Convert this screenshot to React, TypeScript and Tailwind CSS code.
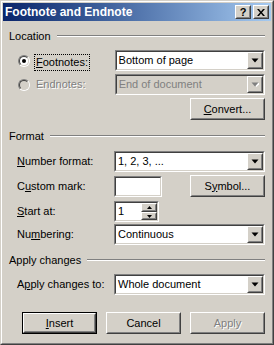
import React from "react";

const font = "[font-family:'Liberation_Sans',Arial,sans-serif]";

function Raised({ className = "", inner = "", children }: { className?: string; inner?: string; children?: React.ReactNode }) {
  return (
    <div className={`border border-t-white border-l-white border-r-[#404040] border-b-[#404040] bg-[#d4d0c8] ${className}`}>
      <div className={`w-full h-full border border-t-[#d4d0c8] border-l-[#d4d0c8] border-r-[#808080] border-b-[#808080] flex items-center justify-center ${inner}`}>
        {children}
      </div>
    </div>
  );
}

function Sunken({ className = "", bg = "bg-white", children }: { className?: string; bg?: string; children?: React.ReactNode }) {
  return (
    <div className={`border border-t-[#808080] border-l-[#808080] border-r-white border-b-white ${className}`}>
      <div className={`w-full h-full border border-t-[#404040] border-l-[#404040] border-r-[#d4d0c8] border-b-[#d4d0c8] flex items-center ${bg}`}>
        {children}
      </div>
    </div>
  );
}

function Arrow({ disabled = false }: { disabled?: boolean }) {
  return (
    <svg width="8" height="5" viewBox="0 0 8 5">
      {disabled && <path d="M2 1h7l-3.5 4z" fill="#fff" />}
      <path d="M0.5 0.5h7l-3.5 4z" fill={disabled ? "#808080" : "#000"} />
    </svg>
  );
}

function Combo({ value, disabled = false }: { value: string; disabled?: boolean }) {
  return (
    <Sunken className="w-[151px] h-[21px]" bg={disabled ? "bg-[#d4d0c8]" : "bg-white"}>
      <span className={`flex-1 pl-[2px] text-[11px] leading-none ${disabled ? "text-[#808080]" : "text-black"}`}>{value}</span>
      <Raised className="w-[16px] h-[17px]">
        <Arrow disabled={disabled} />
      </Raised>
    </Sunken>
  );
}

function Btn({ children, disabled = false, def = false }: { children: React.ReactNode; disabled?: boolean; def?: boolean }) {
  const text = (
    <span className={`text-[11px] leading-none ${disabled ? "text-[#808080] [text-shadow:1px_1px_0_#fff]" : "text-black"}`}>{children}</span>
  );
  if (def) {
    return (
      <div className="w-[75px] h-[22px] border border-black">
        <Raised className="w-full h-full">{text}</Raised>
      </div>
    );
  }
  return <Raised className="w-[75px] h-[22px]">{text}</Raised>;
}

function Header({ label }: { label: string }) {
  return (
    <div className="flex items-center h-[14px]">
      <span className="text-[11px] leading-none text-black">{label}</span>
      <div className="flex-1 ml-[6px] h-[2px] border-t border-t-[#808080] border-b border-b-white" />
    </div>
  );
}

function Radio({ checked, disabled = false }: { checked: boolean; disabled?: boolean }) {
  return (
    <div className="w-[12px] h-[12px] rounded-full border border-t-[#808080] border-l-[#808080] border-r-white border-b-white">
      <div className={`w-full h-full rounded-full border border-t-[#404040] border-l-[#404040] border-r-[#d4d0c8] border-b-[#d4d0c8] flex items-center justify-center ${disabled ? "bg-[#d4d0c8]" : "bg-white"}`}>
        {checked && <div className="w-[4px] h-[4px] rounded-full bg-black" />}
      </div>
    </div>
  );
}

function Row({ label, children }: { label: React.ReactNode; children: React.ReactNode }) {
  return (
    <div className="flex items-center pl-[8px]">
      <div className="w-[97px] text-[11px] leading-none text-black">{label}</div>
      {children}
    </div>
  );
}

export default function App() {
  return (
    <div className={`w-[274px] h-[345px] bg-[#d4d0c8] border border-t-[#d4d0c8] border-l-[#d4d0c8] border-r-[#404040] border-b-[#404040] ${font}`}>
      <div className="w-full h-full border border-t-white border-l-white border-r-[#808080] border-b-[#808080] p-[1px] flex flex-col">
        <div className="h-[18px] bg-linear-to-r from-[#0a246a] to-[#a6caf0] flex items-center pl-[2px] pr-[2px]">
          <span className="flex-1 text-white font-bold text-[12px] leading-none">Footnote and Endnote</span>
          <div className="flex gap-[2px]">
            <Raised className="w-[16px] h-[14px]">
              <span className="text-[11px] font-bold leading-none text-black">?</span>
            </Raised>
            <Raised className="w-[16px] h-[14px]">
              <svg width="8" height="7" viewBox="0 0 8 7">
                <path d="M0 0h2l2 2.5 2-2.5h2L5 3.5 8 7H6L4 4.5 2 7H0l3-3.5z" fill="#000" />
              </svg>
            </Raised>
          </div>
        </div>

        <div className="flex flex-col pl-[6px] pr-[6px]">
          <div className="mt-[8px]">
            <Header label="Location" />
          </div>

          <div className="mt-[7px] h-[21px] flex items-center pl-[9px]">
            <Radio checked />
            <div className="w-[85px] pl-[4px]">
              <span className="inline-block border border-dotted border-black px-[1px] py-[2px] text-[11px] leading-none text-black">
                <span className="underline">F</span>ootnotes:
              </span>
            </div>
            <Combo value="Bottom of page" />
          </div>

          <div className="mt-[3px] h-[21px] flex items-center pl-[9px]">
            <Radio checked={false} disabled />
            <div className="w-[85px] pl-[6px] text-[11px] leading-none text-[#808080] [text-shadow:1px_1px_0_#fff]">Endnotes:</div>
            <Combo value="End of document" disabled />
          </div>

          <div className="mt-[3px] flex justify-end">
            <Btn>
              <span className="underline">C</span>onvert...
            </Btn>
          </div>

          <div className="mt-[9px]">
            <Header label="Format" />
          </div>

          <div className="mt-[8px]">
            <Row label={<><span className="underline">N</span>umber format:</>}>
              <Combo value="1, 2, 3, ..." />
            </Row>
          </div>

          <div className="mt-[3px] h-[22px]">
            <Row label={<>C<span className="underline">u</span>stom mark:</>}>
              <Sunken className="w-[48px] h-[21px]" />
              <div className="flex-1 flex justify-end">
                <Btn>
                  S<span className="underline">y</span>mbol...
                </Btn>
              </div>
            </Row>
          </div>

          <div className="mt-[4px]">
            <Row label={<><span className="underline">S</span>tart at:</>}>
              <Sunken className="w-[45px] h-[21px]">
                <span className="flex-1 pl-[2px] text-[11px] leading-none text-black">1</span>
                <div className="flex flex-col">
                  <Raised className="w-[16px] h-[9px]">
                    <svg width="5" height="3" viewBox="0 0 5 3"><path d="M2.5 0L5 3H0z" fill="#000" /></svg>
                  </Raised>
                  <Raised className="w-[16px] h-[8px]">
                    <svg width="5" height="3" viewBox="0 0 5 3"><path d="M0 0h5L2.5 3z" fill="#000" /></svg>
                  </Raised>
                </div>
              </Sunken>
            </Row>
          </div>

          <div className="mt-[2px]">
            <Row label={<>Nu<span className="underline">m</span>bering:</>}>
              <Combo value="Continuous" />
            </Row>
          </div>

          <div className="mt-[8px]">
            <Header label="Apply changes" />
          </div>

          <div className="mt-[7px]">
            <Row label={<>A<span className="underline">p</span>ply changes to:</>}>
              <Combo value="Whole document" />
            </Row>
          </div>

          <div className="mt-[17px] flex gap-[9px] pl-[13px]">
            <Btn def>
              <span className="underline">I</span>nsert
            </Btn>
            <Btn>Cancel</Btn>
            <Btn disabled>Apply</Btn>
          </div>
        </div>
      </div>
    </div>
  );
}
